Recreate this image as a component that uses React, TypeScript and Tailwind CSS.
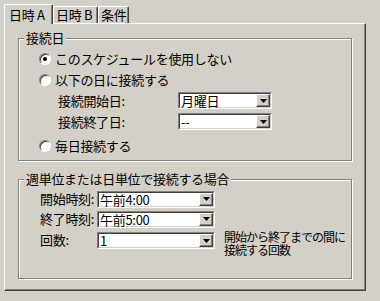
import type { ReactNode } from "react";

function Tab({ label, active, className }: { label: string; active?: boolean; className: string }) {
  return (
    <div
      className={`${className} flex items-center bg-[#d4d0c8] border-t border-l border-r border-t-white border-l-white border-r-[#404040] rounded-t-[2px] shadow-[inset_-1px_0_0_#808080] whitespace-nowrap ${
        active ? "h-[20px] mb-[-1px] pl-[4px]" : "h-[17px] pl-[2px]"
      }`}
    >
      {label}
    </div>
  );
}

function Radio({ checked, children }: { checked?: boolean; children: ReactNode }) {
  return (
    <div className="flex items-center gap-[4px]">
      <span className="w-[12px] h-[12px] rounded-full bg-white border border-t-[#808080] border-l-[#808080] border-r-white border-b-white shadow-[inset_1px_1px_0_#404040] flex items-center justify-center">
        {checked && <span className="w-[4px] h-[4px] rounded-full bg-black" />}
      </span>
      <span className="whitespace-nowrap">{children}</span>
    </div>
  );
}

function Combo({ value, className }: { value: string; className: string }) {
  return (
    <div className={`${className} h-[17px] flex border border-t-[#808080] border-l-[#808080] border-r-white border-b-white`}>
      <div className="flex-1 flex items-stretch bg-white border border-t-[#404040] border-l-[#404040] border-r-[#d4d0c8] border-b-[#d4d0c8]">
        <span className="flex-1 pl-[1px] leading-[13px] whitespace-nowrap">{value}</span>
        <span className="w-[14px] flex items-center justify-center bg-[#d4d0c8] border-t border-l border-t-white border-l-white border-r border-b border-r-[#404040] border-b-[#404040] shadow-[inset_-1px_-1px_0_#808080]">
          <svg width="7" height="4" viewBox="0 0 7 4">
            <polygon points="0,0 7,0 3.5,4" fill="#000" />
          </svg>
        </span>
      </div>
    </div>
  );
}

function Group({ title, className, children }: { title: string; className: string; children: ReactNode }) {
  return (
    <fieldset
      className={`${className} w-[334px] border border-[#808080] shadow-[1px_1px_0_#fff,inset_1px_1px_0_#fff]`}
    >
      <legend className="ml-[5px] px-[2px] bg-[#d4d0c8] leading-[14px] whitespace-nowrap">{title}</legend>
      {children}
    </fieldset>
  );
}

export default function App() {
  return (
    <div className="w-[380px] h-[301px] bg-[#d4d0c8] text-black text-[13px] leading-[14px] tracking-[-0.3px] font-['Noto_Sans_CJK_JP','Noto_Sans',sans-serif] pl-[4px] pt-[4px] overflow-hidden">
      {/* タブ */}
      <div className="relative z-10 flex items-end h-[19px]">
        <Tab label="日時 A" active className="w-[49px]" />
        <Tab label="日時 B" className="w-[45px]" />
        <Tab label="条件" className="w-[31px]" />
      </div>

      {/* タブ本体 */}
      <div className="w-[362px] h-[268px] border border-t-white border-l-white border-r-[#404040] border-b-[#404040] shadow-[inset_-1px_-1px_0_#808080] pl-[13px] pt-[7px]">
        <Group title="接続日" className="pt-[3px] pb-[4px]">
          <div className="h-[21px] flex items-center pl-[20px]">
            <Radio checked>このスケジュールを使用しない</Radio>
          </div>
          <div className="h-[21px] flex items-center pl-[20px]">
            <Radio>以下の日に接続する</Radio>
          </div>
          <div className="h-[21px] flex items-center pl-[39px]">
            <span className="w-[120px] whitespace-nowrap">接続開始日:</span>
            <Combo value="月曜日" className="w-[94px]" />
          </div>
          <div className="h-[21px] flex items-center pl-[39px]">
            <span className="w-[120px] whitespace-nowrap">接続終了日:</span>
            <Combo value="--" className="w-[94px]" />
          </div>
          <div className="h-[21px] mt-[3px] flex items-center pl-[20px]">
            <Radio>毎日接続する</Radio>
          </div>
        </Group>

        <Group title="週単位または日単位で接続する場合" className="mt-[11px] pt-[3px] pb-[28px]">
          <div className="h-[20px] flex items-center pl-[21px]">
            <span className="w-[57px] whitespace-nowrap">開始時刻:</span>
            <Combo value="午前4:00" className="w-[118px]" />
          </div>
          <div className="h-[20px] flex items-center pl-[21px]">
            <span className="w-[57px] whitespace-nowrap">終了時刻:</span>
            <Combo value="午前5:00" className="w-[118px]" />
          </div>
          <div className="h-[20px] mt-[1px] flex items-start pl-[21px]">
            <span className="w-[57px] pt-[3px]">回数:</span>
            <Combo value="1" className="w-[118px] mt-[2px]" />
            <p className="ml-[9px] text-[12px] tracking-[-1px] leading-[13px] whitespace-nowrap">
              開始から終了までの間に
              <br />
              接続する回数
            </p>
          </div>
        </Group>
      </div>
    </div>
  );
}
